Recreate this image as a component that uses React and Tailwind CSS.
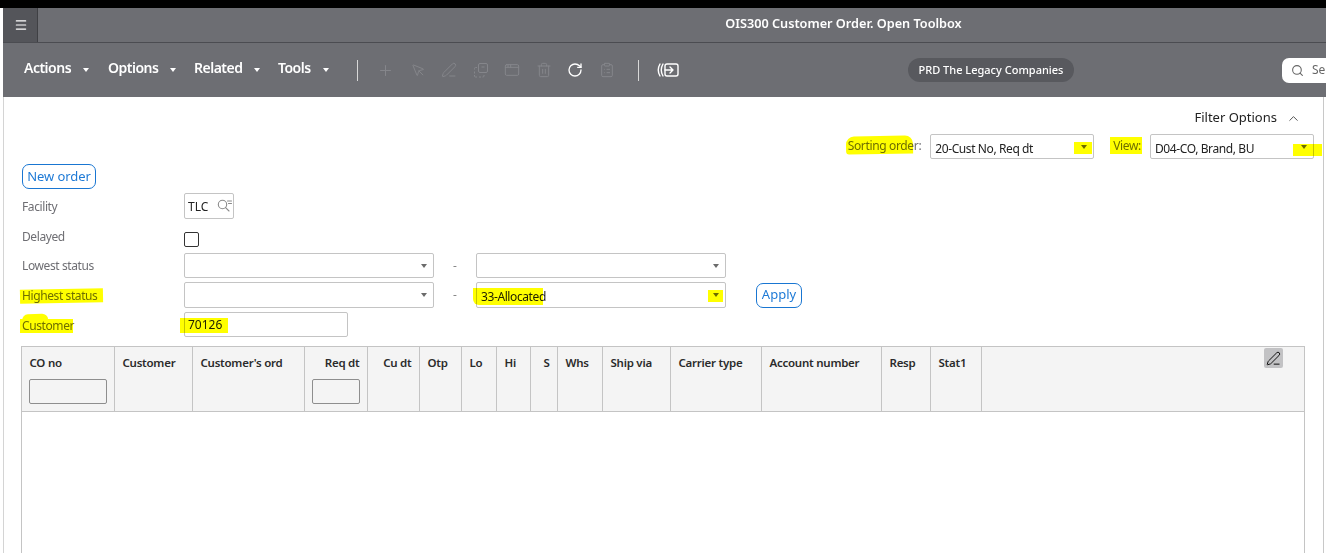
import { Plus, MousePointer, PenLine, AppWindow, Trash2, RotateCw, ClipboardList, Search, ChevronUp, Menu } from 'lucide-react';

const font = "font-['Noto_Sans',sans-serif]";

const columns = [
  { label: 'CO no', width: 'w-[93px]', filter: 'w-[78px] -ml-[1px]' },
  { label: 'Customer', width: 'w-[78px]' },
  { label: "Customer's ord", width: 'w-[112px]' },
  { label: 'Req dt', width: 'w-[63px]', right: true, filter: 'w-[48px]' },
  { label: 'Cu dt', width: 'w-[52px]', right: true },
  { label: 'Otp', width: 'w-[42px]' },
  { label: 'Lo', width: 'w-[35px]' },
  { label: 'Hi', width: 'w-[34px]' },
  { label: 'S', width: 'w-[27px]', right: true },
  { label: 'Whs', width: 'w-[45px]' },
  { label: 'Ship via', width: 'w-[68px]' },
  { label: 'Carrier type', width: 'w-[91px]' },
  { label: 'Account number', width: 'w-[120px]' },
  { label: 'Resp', width: 'w-[49px]' },
  { label: 'Stat1', width: 'w-[51px]' },
];

function Mark ({ className }) {
  return <span className={`absolute bg-[#ffff00] mix-blend-multiply ${className}`} />;
}

function Caret ({ className = 'border-t-[#6b6b6b]' }) {
  return <span className={`w-0 h-0 border-x-[3.5px] border-x-transparent border-t-[4px] ${className}`} />;
}

function MenuItem ({ label, className }) {
  return (
    <div className={`flex items-center mb-[5px] text-white text-[14px] font-semibold tracking-[-0.5px] ${className}`}>
      {label}
      <Caret className="border-t-white ml-[12px] mt-[4px]" />
    </div>
  );
}

function Dropdown ({ width, value, mark, caretMark, h = 'h-[26px]' }) {
  return (
    <div className={`relative ${width} ${h} border border-[#c4c4c4] rounded-[2px] bg-white flex items-center justify-between pl-[4px] pr-[6px] text-[12px] tracking-[-0.4px] text-[#222]`}>
      <span className="relative top-[2px]">
        {value}
        {mark && <Mark className={mark} />}
      </span>
      <Caret />
      {caretMark && <Mark className={caretMark} />}
    </div>
  );
}

function Label ({ text, mark, children }) {
  return (
    <div className="relative w-[162px] text-[12px] text-[#6e6e73] tracking-[-0.4px]">
      <span className="relative top-[1px]">
        {text}
        {mark && <Mark className={mark} />}
        {children}
      </span>
    </div>
  );
}

function CopyDashed () {
  return (
    <svg width="16" height="16" viewBox="0 0 16 16" fill="none" stroke="currentColor" strokeWidth="1">
      <rect x="5.5" y="1.5" width="9" height="9" rx="1.5" />
      <path d="M8.5 5h3M4 5.5H2.5a1 1 0 0 0-1 1v1M1.5 9.5v2M1.5 13v1a1 1 0 0 0 1 1H4M6 15h2M9.5 15h.5a1 1 0 0 0 1-1v-1" />
    </svg>
  );
}

function OpenPanel () {
  return (
    <svg width="22" height="16" viewBox="0 0 22 16" fill="none" stroke="currentColor" strokeWidth="1.4" strokeLinecap="round" strokeLinejoin="round">
      <path d="M3 2C.9 5.6.9 10.4 3 14M6 2C3.9 5.6 3.9 10.4 6 14" />
      <rect x="8" y="2" width="13" height="12" rx="2" />
      <path d="M8 8h8M13 5l3 3-3 3" />
    </svg>
  );
}

function LookupIcon () {
  return (
    <svg width="15" height="14" viewBox="0 0 15 14" fill="none" stroke="#8a8a8a" strokeWidth="1.1" strokeLinecap="round">
      <circle cx="5.5" cy="5.5" r="4.2" />
      <path d="M8.6 8.6L12 12M10.5 2h4M11.5 4.5h3" />
    </svg>
  );
}

export default function App () {
  return (
    <div className={`relative h-[553px] w-[1326px] overflow-hidden bg-white ${font}`}>
      <div className="h-[8px] bg-black" />

      <div className="ml-[3px] h-[35px] flex bg-[#6d6e73] border-b border-[#4b4c51]">
        <div className="w-[35px] flex items-center justify-center pl-[2px] bg-[#54555a] border-r border-[#3f4044] text-white">
          <Menu size={14} strokeWidth={2} />
        </div>
        <div className="flex-1 flex items-center justify-center pl-[323px] text-white text-[12.7px] font-semibold pb-[3px]">
          OIS300 Customer Order. Open Toolbox
        </div>
      </div>

      <div className="ml-[3px] h-[54px] flex items-center bg-[#6d6e73] pl-[21px]">
        <MenuItem label="Actions" className="w-[84px]" />
        <MenuItem label="Options" className="w-[86px]" />
        <MenuItem label="Related" className="w-[84px]" />
        <MenuItem label="Tools" className="w-[79px]" />
        <div className="w-px h-[21px] bg-[#d8d8d8]" />
        <div className="flex items-center gap-[15.5px] pl-[19px] text-[#85868b]">
          <Plus size={17} strokeWidth={1.5} />
          <MousePointer size={15} strokeWidth={1.5} className="ml-[1px]" />
          <PenLine size={16} strokeWidth={1.5} />
          <CopyDashed />
          <AppWindow size={16} strokeWidth={1.5} />
          <Trash2 size={16} strokeWidth={1.5} />
          <RotateCw size={16} strokeWidth={2} className="text-white" />
          <ClipboardList size={16} strokeWidth={1.5} />
        </div>
        <div className="w-px h-[21px] bg-[#d8d8d8] ml-[23px]" />
        <div className="ml-[18px] text-white"><OpenPanel /></div>
        <div className="ml-[229px] h-[24px] px-[11px] rounded-full bg-[#58595e] text-white text-[11px] font-medium flex items-center">
          PRD The Legacy Companies
        </div>
        <div className="ml-auto h-[25px] w-[44px] rounded-l-[7px] bg-white flex items-center pl-[9px] gap-[8px] text-[#666] text-[12px] overflow-hidden">
          <Search size={13} className="shrink-0" />
          Se
        </div>
      </div>

      <div className="relative ml-[3px] h-[456px] border-l border-[#d4d4d4] pl-[18px] pr-[18px]">
        <div className="absolute right-[2px] top-0 bottom-0 w-px bg-[#c8c8c8]" />

        <div className="h-[37px] flex items-center justify-end pr-[7px] pt-[5px] text-[13px] text-[#222]">
          Filter Options
          <ChevronUp size={15} strokeWidth={1.6} className="ml-[9px] text-[#555]" />
        </div>

        <div className="flex items-center justify-end -mr-[6px]">
          <div className="relative text-[12px] text-[#6e6e73] tracking-[-0.35px] mr-[9px] -mt-[2px]">
            Sorting order:
            <Mark className="left-[-2px] right-[9px] top-[-1px] bottom-[1px] rounded-t-[8px] rounded-bl-[3px] -rotate-1" />
          </div>
          <Dropdown
            width="w-[164px]"
            value="20-Cust No, Req dt"
            h="h-[25px]"
            caretMark="right-[1px] top-[7px] w-[18px] h-[12px]"
          />
          <div className="relative text-[12px] text-[#6e6e73] tracking-[-0.35px] ml-[19px] mr-[9px] -mt-[2px]">
            View:
            <Mark className="left-[-3px] right-[-1px] top-[0px] bottom-[1px]" />
          </div>
          <Dropdown
            width="w-[164px]"
            value="D04-CO, Brand, BU"
            h="h-[25px]"
            caretMark="right-[-9px] top-[9px] w-[29px] h-[12px]"
          />
        </div>

        <button className="block mt-[5px] h-[25px] w-[74px] border border-[#1976d2] rounded-[7px] text-[#1e7ad6] text-[13px] tracking-[-0.1px]">
          New order
        </button>

        <div className="flex items-center mt-[4px] h-[26px]">
          <Label text="Facility" />
          <div className="w-[50px] h-[26px] border border-[#c4c4c4] rounded-[2px] flex items-center justify-between pl-[3px] pr-[1px] text-[12px] text-[#222]">
            <span className="relative top-[1px]">TLC</span>
            <LookupIcon />
          </div>
        </div>

        <div className="flex items-center mt-[12px] h-[16px]">
          <div className="relative w-[162px] -top-[2px] text-[12px] text-[#6e6e73] tracking-[-0.4px]">Delayed</div>
          <div className="w-[15px] h-[15px] border border-[#333] rounded-[2px]" />
        </div>

        <div className="flex items-center mt-[6px] h-[25px]">
          <div className="w-[162px] text-[12px] text-[#6e6e73] tracking-[-0.4px]">Lowest status</div>
          <Dropdown width="w-[250px]" h="h-[25px]" />
          <span className="w-[42px] text-center text-[12px] text-[#888]">-</span>
          <Dropdown width="w-[250px]" h="h-[25px]" />
        </div>

        <div className="flex items-center mt-[4px] h-[26px]">
          <Label text="Highest status" mark="left-[-2px] right-[-6px] top-[2px] bottom-[1px] -rotate-1" />
          <Dropdown width="w-[250px]" />
          <span className="w-[42px] text-center text-[12px] text-[#888]">-</span>
          <Dropdown
            width="w-[250px]"
            value="33-Allocated"
            mark="left-[-8px] right-[3px] top-[0px] bottom-[1px] rounded-bl-[6px]"
            caretMark="right-[2px] top-[7px] w-[15px] h-[12px]"
          />
          <button className="ml-[30px] h-[25px] w-[46px] border border-[#1976d2] rounded-[7px] text-[#1e7ad6] text-[13px]">
            Apply
          </button>
        </div>

        <div className="flex items-center mt-[4px] h-[25px]">
          <Label text="Customer" mark="left-[-2px] right-[1px] top-[2px] bottom-[1px]">
            <Mark className="left-[0px] w-[26px] top-[-3px] h-[7px] rounded-t-[6px] -rotate-3" />
          </Label>
          <div className="relative w-[164px] h-[25px] border border-[#c4c4c4] rounded-[2px] flex items-center pl-[3px] text-[12px] text-[#222]">
            <span className="relative">
              70126
              <Mark className="left-[-8px] right-[-6px] top-[2px] bottom-[1px]" />
            </span>
          </div>
        </div>

        <div className="mt-[9px] w-[1284px] h-[300px] border border-[#c4c4c4] -ml-[1px]">
          <div className="relative h-[65px] flex bg-[#f4f4f4] border-b border-[#c4c4c4]">
            {columns.map((col) => (
              <div
                key={col.label}
                className={`${col.width} shrink-0 flex flex-col border-r border-[#c4c4c4] px-[7.5px] pt-[7px] ${col.right ? 'items-end' : 'items-start'}`}
              >
                <span className="text-[11.5px] font-semibold text-[#2b2b2b] tracking-[-0.25px] whitespace-nowrap">{col.label}</span>
                {col.filter && <div className={`${col.filter} h-[25px] mt-[8px] shrink-0 border border-[#8e8e8e] rounded-[2px] bg-[#f4f4f4]`} />}
              </div>
            ))}
            <div className="absolute right-[21px] top-[1px] w-[19px] h-[20px] rounded-[2px] bg-[#c2c2c4] flex items-center justify-center text-[#111]">
              <PenLine size={15} strokeWidth={1.6} />
            </div>
          </div>
        </div>
      </div>
    </div>
  );
}
